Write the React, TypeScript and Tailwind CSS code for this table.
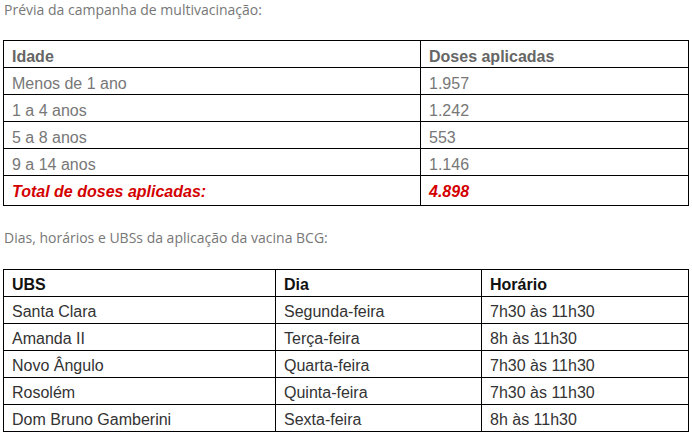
import React from 'react';

const doses = [
  { idade: 'Menos de 1 ano', total: '1.957' },
  { idade: '1 a 4 anos', total: '1.242' },
  { idade: '5 a 8 anos', total: '553' },
  { idade: '9 a 14 anos', total: '1.146' },
];

const ubs = [
  { nome: 'Santa Clara', dia: 'Segunda-feira', horario: '7h30 às 11h30' },
  { nome: 'Amanda II', dia: 'Terça-feira', horario: '8h às 11h30' },
  { nome: 'Novo Ângulo', dia: 'Quarta-feira', horario: '7h30 às 11h30' },
  { nome: 'Rosolém', dia: 'Quinta-feira', horario: '7h30 às 11h30' },
  { nome: 'Dom Bruno Gamberini', dia: 'Sexta-feira', horario: '8h às 11h30' },
];

const cell = 'border border-black px-2 pt-[6px] pb-[2px] align-bottom leading-[18px] text-left';
// first table sits its text a little lower in the cell
const lowCell = 'border border-black px-2 pt-[7px] pb-px align-bottom leading-[18px] text-left';

export default function App() {
  return (
    <div className="w-[692px] h-[436px] bg-white px-[3px] overflow-hidden" style={{ fontFamily: '"Liberation Sans", Arial, sans-serif' }}>
      {/* Caption 1 */}
      <p className="pl-px text-[14px] leading-[19px] text-[#777]" style={{ fontFamily: '"Open Sans", sans-serif' }}>
        Prévia da campanha de multivacinação:
      </p>

      {/* Doses table */}
      <table className="mt-[21px] w-[686px] table-fixed border-collapse text-[16px]">
        <colgroup>
          <col className="w-[417px]" />
          <col />
        </colgroup>
        <thead>
          <tr className="text-[#666]">
            <th className={`${lowCell} font-bold`}>Idade</th>
            <th className={`${lowCell} font-bold`}>Doses aplicadas</th>
          </tr>
        </thead>
        <tbody>
          {doses.map((d) => (
            <tr key={d.idade} className="text-[#777]">
              <td className={lowCell}>{d.idade}</td>
              <td className={lowCell}>{d.total}</td>
            </tr>
          ))}
          <tr className="text-[#d40000] font-bold italic">
            <td className="border border-black px-2 pt-[7px] pb-[4px] align-bottom leading-[18px]">Total de doses aplicadas:</td>
            <td className="border border-black px-2 pt-[7px] pb-[4px] align-bottom leading-[18px]">4.898</td>
          </tr>
        </tbody>
      </table>

      {/* Caption 2 */}
      <p className="mt-[22px] pl-px text-[14px] leading-[19px] text-[#777]" style={{ fontFamily: '"Open Sans", sans-serif' }}>
        Dias, horários e UBSs da aplicação da vacina BCG:
      </p>

      {/* UBS table */}
      <table className="mt-[22px] w-[686px] table-fixed border-collapse text-[16px]">
        <colgroup>
          <col className="w-[272px]" />
          <col className="w-[206px]" />
          <col />
        </colgroup>
        <thead>
          <tr className="text-[#111]">
            <th className={`${cell} font-bold`}>UBS</th>
            <th className={`${cell} font-bold`}>Dia</th>
            <th className={`${cell} font-bold`}>Horário</th>
          </tr>
        </thead>
        <tbody>
          {ubs.map((u) => (
            <tr key={u.nome} className="text-[#333]">
              <td className={cell}>{u.nome}</td>
              <td className={cell}>{u.dia}</td>
              <td className={cell}>{u.horario}</td>
            </tr>
          ))}
        </tbody>
      </table>
    </div>
  );
}
